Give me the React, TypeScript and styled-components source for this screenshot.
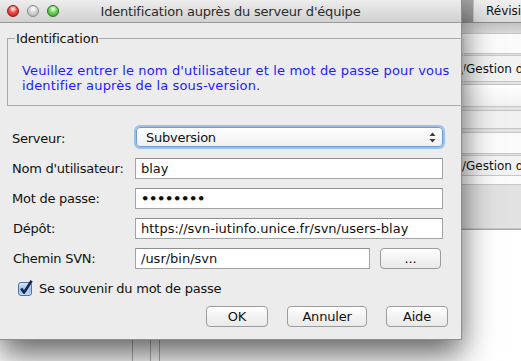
import React from 'react'
import styled, { createGlobalStyle } from 'styled-components'

const GlobalStyle = createGlobalStyle`
  html, body {
    margin: 0;
    padding: 0;
    background: #ffffff;
  }
  body {
    font-family: 'DejaVu Sans', 'Lucida Grande', sans-serif;
    font-size: 12px;
    color: #111;
  }
  * {
    box-sizing: border-box;
  }
`

const Stage = styled.div`
  position: relative;
  width: 521px;
  height: 361px;
  overflow: hidden;
  background: #ffffff;
`

/* --- the project window lying behind the dialog --- */

const Backdrop = styled.div`
  width: 100%;
  height: 100%;
  display: flex;
  flex-direction: column;
`

const TabBar = styled.div`
  height: 23px;
  flex-shrink: 0;
  display: flex;
  border-bottom: 1px solid #8c8c8c;
`

const TabSpacer = styled.div`
  width: 474px;
  flex-shrink: 0;
  background: linear-gradient(#a3a3a3, #8f8f8f);
  border-right: 1px solid #c4c4c4;
`

const Tab = styled.div`
  flex: 1;
  padding-left: 12px;
  line-height: 22px;
  background: linear-gradient(#f0f0f0, #dadada);
  color: #111;
  white-space: nowrap;
  overflow: hidden;
`

const BackRow = styled.div<{ $h: number; $bg: string }>`
  height: ${(p) => p.$h}px;
  flex-shrink: 0;
  background: ${(p) => p.$bg};
  border-bottom: 1px solid #c6c6c6;
  padding-left: 462px;
  line-height: ${(p) => p.$h}px;
  white-space: nowrap;
  overflow: hidden;
  color: #111;
`

const Table = styled.div`
  flex: 1;
  display: flex;
  border-top: 1px solid #a8a8a8;
`

const Column = styled.div<{ $w: number }>`
  width: ${(p) => p.$w}px;
  border-right: 1px solid #b4b4b4;
`

/* --- dialog --- */

const Dialog = styled.section`
  position: absolute;
  left: 0;
  top: 0;
  width: 462px;
  height: 340px;
  display: flex;
  flex-direction: column;
  background: #ececec;
  border-right: 1px solid #8e8e8e;
  border-bottom: 1px solid #8e8e8e;
  box-shadow: 0 14px 30px rgba(0, 0, 0, 0.62);
`

const TitleBar = styled.header`
  height: 23px;
  display: grid;
  grid-template-columns: 1fr auto 1fr;
  align-items: center;
  background: linear-gradient(#ededed, #d0d0d0);
  border-bottom: 1px solid #9a9a9a;
`

const Lights = styled.div`
  display: flex;
  gap: 8px;
  padding-left: 7px;
`

const Light = styled.span<{ $c1: string; $c2: string; $edge: string }>`
  width: 12px;
  height: 12px;
  border-radius: 50%;
  border: 1px solid ${(p) => p.$edge};
  background: radial-gradient(circle at 50% 30%, #ffffff 0, ${(p) => p.$c1} 45%, ${(p) => p.$c2} 100%);
`

const Title = styled.h1`
  margin: 0;
  font-size: 13px;
  font-weight: normal;
  color: #2b2b2b;
  letter-spacing: -0.2px;
`

const Body = styled.div`
  flex: 1;
  display: flex;
  flex-direction: column;
  padding: 8px 0 0;
`

const Group = styled.fieldset`
  margin: 0 8px 0 7px;
  padding: 0 14px 12px;
  border: 1px solid #a9a9a9;
`

const Legend = styled.legend`
  margin-left: -7px;
  padding: 0 1px;
  font-size: 13px;
  color: #111;
  letter-spacing: -0.2px;
`

const Notice = styled.p`
  margin: 17px 0 0;
  font-size: 13px;
  line-height: 15px;
  color: #1d1dff;
  letter-spacing: 0.15px;
  white-space: nowrap;
`

const Form = styled.div`
  display: grid;
  grid-template-columns: 123px 1fr;
  row-gap: 9px;
  align-items: center;
  margin-top: 21px;
  padding: 0 18px 0 12px;
`

const Label = styled.label<{ $indent?: number }>`
  padding-left: ${(p) => p.$indent ?? 0}px;
  font-size: 13px;
  color: #111;
  letter-spacing: -0.25px;
`

const SelectBox = styled.div`
  height: 20px;
  margin: 0 0 2px 1px;
  display: flex;
  align-items: center;
  justify-content: space-between;
  padding: 0 6px 0 9px;
  border: 1px solid #6f9bd6;
  border-radius: 4px;
  background: linear-gradient(#ffffff, #f0f0f0);
  box-shadow: 0 0 0 2px #9cc0ec;
  font-size: 13px;
  letter-spacing: -0.25px;
`

const Field = styled.div`
  height: 21px;
  padding: 0 5px;
  display: flex;
  align-items: center;
  background: #ffffff;
  border: 1px solid #a3a3a3;
  border-top-color: #8e8e8e;
  font-size: 13px;
  white-space: nowrap;
  overflow: hidden;
`

const Dots = styled.span`
  font-size: 13px;
  letter-spacing: -0.3px;
  font-weight: bold;
`

const PathRow = styled.div`
  display: grid;
  grid-template-columns: 1fr 61px;
  gap: 10px;
  align-items: center;
  margin-right: 2px;
`

const PushButton = styled.button<{ $w?: number }>`
  width: ${(p) => (p.$w ? `${p.$w}px` : 'auto')};
  height: 21px;
  padding: 0;
  border: 1px solid #9b9b9b;
  border-radius: 4px;
  background: linear-gradient(#ffffff, #f3f3f3 50%, #e9e9e9);
  font-family: inherit;
  font-size: 13px;
  color: #111;
  letter-spacing: -0.2px;
`

const CheckRow = styled.label`
  display: flex;
  align-items: center;
  gap: 5px;
  margin: 11px 0 0 18px;
  font-size: 13px;
  letter-spacing: -0.25px;
  color: #111;
`

const Buttons = styled.div`
  display: flex;
  justify-content: flex-end;
  gap: 19px;
  margin-top: 10px;
  padding-right: 13px;
`

function Arrows() {
  return (
    <svg width="7" height="11" viewBox="0 0 7 11">
      <path d="M3.5 0.5 L6.5 4 L0.5 4 Z" fill="#3c3c3c" />
      <path d="M3.5 10.5 L6.5 7 L0.5 7 Z" fill="#3c3c3c" />
    </svg>
  )
}

function CheckMark() {
  return (
    <svg width="16" height="16" viewBox="0 0 16 16">
      <defs>
        <linearGradient id="cb" x1="0" y1="0" x2="0" y2="1">
          <stop offset="0" stopColor="#dbe9fb" />
          <stop offset="0.5" stopColor="#9fc3ef" />
          <stop offset="1" stopColor="#bcd8f7" />
        </linearGradient>
      </defs>
      <rect x="0.5" y="2.5" width="13" height="13" rx="2.5" fill="url(#cb)" stroke="#56739e" />
      <path d="M3.2 8.6 L6 12.6 L13.6 0.8" fill="none" stroke="#17254a" strokeWidth="2.6" strokeLinejoin="round" />
    </svg>
  )
}

export default function App() {
  return (
    <Stage>
      <GlobalStyle />
      <Backdrop>
        <TabBar>
          <TabSpacer />
          <Tab>Révisions</Tab>
        </TabBar>
        <BackRow $h={11} $bg="linear-gradient(#c2c2c2, #d9d9d9)" />
        <BackRow $h={20} $bg="#fbfbfb" />
        <BackRow $h={2} $bg="#e4e4e4" />
        <BackRow $h={26} $bg="#f3f3f3">/Gestion de projet</BackRow>
        <BackRow $h={3} $bg="#e4e4e4" />
        <BackRow $h={22} $bg="linear-gradient(#ffffff, #f2f2f2)" />
        <BackRow $h={4} $bg="#e2e2e2" />
        <BackRow $h={18} $bg="#f1f1f1" />
        <BackRow $h={4} $bg="#e2e2e2" />
        <BackRow $h={21} $bg="#fbfbfb" />
        <BackRow $h={2} $bg="#e4e4e4" />
        <BackRow $h={20} $bg="#f3f3f3">/Gestion de projet</BackRow>
        <BackRow $h={9} $bg="#fbfbfb" />
        <BackRow $h={44} $bg="linear-gradient(90deg, #cfcfcf, #e2e2e2)" />
        <Table>
          <Column $w={133} />
          <Column $w={18} />
          <Column $w={9} />
        </Table>
      </Backdrop>

      <Dialog>
        <TitleBar>
          <Lights>
            <Light $c1="#ee4a45" $c2="#b8120e" $edge="#8c1a17" />
            <Light $c1="#d6d6d6" $c2="#a9a9a9" $edge="#8a8a8a" />
            <Light $c1="#6cd35a" $c2="#2f9a22" $edge="#2e6e26" />
          </Lights>
          <Title>Identification auprès du serveur d'équipe</Title>
          <span />
        </TitleBar>

        <Body>
          <Group>
            <Legend>Identification</Legend>
            <Notice>
              Veuillez entrer le nom d'utilisateur et le mot de passe pour vous
              <br />
              identifier auprès de la sous-version.
            </Notice>
          </Group>

          <Form>
            <Label>Serveur:</Label>
            <SelectBox>
              <span>Subversion</span>
              <Arrows />
            </SelectBox>

            <Label>Nom d'utilisateur:</Label>
            <Field>blay</Field>

            <Label>Mot de passe:</Label>
            <Field>
              <Dots>••••••••</Dots>
            </Field>

            <Label $indent={1}>Dépôt:</Label>
            <Field>https://svn-iutinfo.unice.fr/svn/users-blay</Field>

            <Label $indent={1}>Chemin SVN:</Label>
            <PathRow>
              <Field>/usr/bin/svn</Field>
              <PushButton>...</PushButton>
            </PathRow>
          </Form>

          <CheckRow>
            <CheckMark />
            Se souvenir du mot de passe
          </CheckRow>

          <Buttons>
            <PushButton $w={62}>OK</PushButton>
            <PushButton $w={80}>Annuler</PushButton>
            <PushButton $w={62}>Aide</PushButton>
          </Buttons>
        </Body>
      </Dialog>
    </Stage>
  )
}
